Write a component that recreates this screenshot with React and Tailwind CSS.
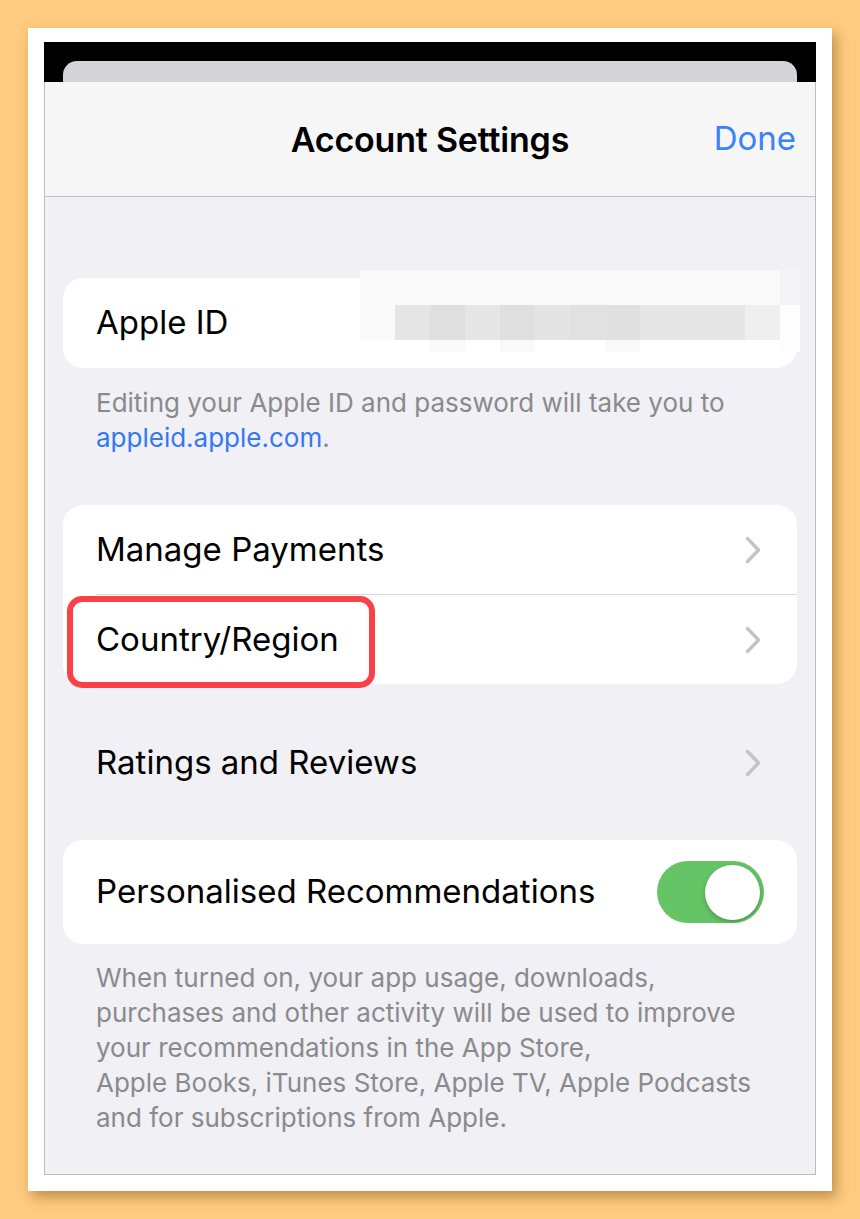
import React from 'react';

const Chevron = () => (
  <svg width="16" height="28" viewBox="0 0 16 28" fill="none" className="shrink-0">
    <path d="M2.5 2.5 L13.5 14 L2.5 25.5" stroke="#c4c4c7" strokeWidth="3.4" strokeLinecap="round" strokeLinejoin="round" />
  </svg>
);

// pixelated blur over the Apple ID value
const mosaicRows = [
  { h: 'h-[35px]', cells: ['bg-[#fafafa]', 'bg-[#fafafa]', 'bg-[#fafafa]', 'bg-[#fafafa]', 'bg-[#fafafa]', 'bg-[#fafafa]', 'bg-[#fafafa]', 'bg-[#fafafa]', 'bg-[#fafafa]', 'bg-[#fafafa]', 'bg-[#fafafa]', 'bg-[#fafafa]', 'bg-[#f4f4f6]'] },
  { h: 'h-[35px]', cells: ['bg-[#fafafa]', 'bg-[#e5e5e5]', 'bg-[#dfdfdf]', 'bg-[#e6e6e6]', 'bg-[#dfdfdf]', 'bg-[#e4e4e4]', 'bg-[#e1e1e1]', 'bg-[#e0e0e0]', 'bg-[#e6e6e6]', 'bg-[#e6e6e6]', 'bg-[#e6e6e6]', 'bg-[#efefef]', 'bg-[#fdfdfd]'] },
  { h: 'h-[12px]', cells: ['bg-transparent', 'bg-transparent', 'bg-[#f9f9f9]', 'bg-transparent', 'bg-[#f9f9f9]', 'bg-transparent', 'bg-transparent', 'bg-[#f9f9f9]', 'bg-transparent', 'bg-transparent', 'bg-transparent', 'bg-transparent', 'bg-[#fdfdfd]'] },
];

const Mosaic = () => (
  <div className="absolute left-[297px] top-[-8px] w-[440px] flex flex-col">
    {mosaicRows.map((row, i) => (
      <div key={i} className={`flex ${row.h}`}>
        {row.cells.map((c, j) => (
          <div key={j} className={`${c} ${j === 12 ? 'w-[20px]' : 'w-[35px]'} h-full`} />
        ))}
      </div>
    ))}
  </div>
);

const Row = ({ label, right, h = 'h-[89px]' }) => (
  <div className={`flex items-center justify-between pl-[33px] pr-[36px] ${h}`}>
    <span className="text-[33px] text-black">{label}</span>
    {right}
  </div>
);

export default function App() {
  return (
    <div className="w-[860px] h-[1219px] bg-[#fecb80] pt-[28px] pl-[28px] font-[family-name:Inter,'Noto_Sans',sans-serif]">
      <div className="w-[804px] h-[1163px] bg-white pt-[14px] px-[16px] shadow-[4px_6px_12px_rgba(110,70,10,0.45)]">
        <div className="w-[772px] h-[1133px] flex flex-col">
          {/* status strip with card behind sheet */}
          <div className="h-[40px] bg-black flex items-end px-[19px]">
            <div className="w-full h-[21px] bg-[#d5d4d9] rounded-t-[14px]" />
          </div>

          <div className="flex-1 flex flex-col border-x border-b border-[#bdbdbf] bg-[#f0f0f5]">
            {/* nav header */}
            <div className="h-[115px] bg-[#f6f6f6] border-b border-[#c2c2c4] relative flex items-center justify-center">
              <span className="text-[34px] font-semibold text-black tracking-[-0.2px]">Account Settings</span>
              <span className="absolute right-[19px] text-[33px] text-[#3a82f7]">Done</span>
            </div>

            <div className="px-[18px] flex flex-col">
              {/* Apple ID */}
              <div className="mt-[81px] relative bg-white rounded-[20px] h-[90px] flex items-center pl-[33px]">
                <span className="text-[33px] text-black">Apple ID</span>
                <Mosaic />
              </div>
              <p className="mt-[17px] pl-[33px] text-[26px] leading-[35px] text-[#8a8a8e]">
                Editing your Apple ID and password will take you to
                <br />
                <span className="text-[#3478f6]">appleid.apple.com</span>.
              </p>

              {/* payments group */}
              <div className="mt-[50px] bg-white rounded-[20px] relative">
                <Row label="Manage Payments" right={<Chevron />} />
                <div className="ml-[33px] h-px bg-[#d8d8dc]" />
                <Row label="Country/Region" right={<Chevron />} />
                <div className="absolute left-[4px] top-[91px] w-[308px] h-[92px] border-[6px] border-[#fa4148] rounded-[15px]" />
              </div>

              <div className="mt-[34px] mb-[33px]">
                <Row label="Ratings and Reviews" right={<Chevron />} />
              </div>

              {/* recommendations */}
              <div className="bg-white rounded-[20px] h-[104px] flex items-center justify-between pl-[33px] pr-[33px]">
                <span className="text-[33px] text-black">Personalised Recommendations</span>
                <div className="w-[107px] h-[62px] rounded-full bg-[#65c466] flex items-center justify-end pr-[4px]">
                  <div className="w-[55px] h-[55px] rounded-full bg-white shadow-[0_2px_5px_rgba(0,0,0,0.25)]" />
                </div>
              </div>
              <p className="mt-[16px] pl-[33px] pr-[10px] text-[26px] leading-[35px] text-[#8a8a8e] whitespace-nowrap">
                When turned on, your app usage, downloads,
                <br />
                purchases and other activity will be used to improve
                <br />
                your recommendations in the App Store,
                <br />
                Apple Books, iTunes Store, Apple TV, Apple Podcasts
                <br />
                and for subscriptions from Apple.
              </p>
            </div>
          </div>
        </div>
      </div>
    </div>
  );
}
